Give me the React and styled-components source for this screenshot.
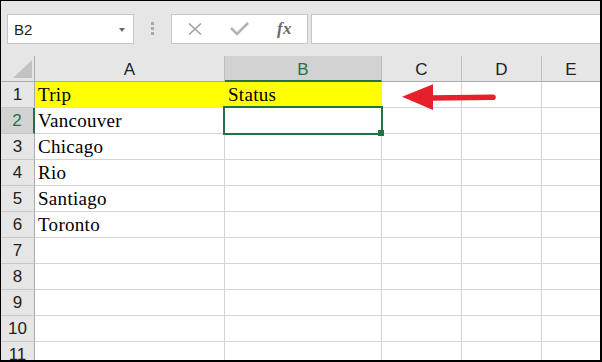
import React from "react";
import styled, { createGlobalStyle } from "styled-components";

const GREEN = "#217346";
const GRID = "#d4d4d4";

const columns = ["A", "B", "C", "D", "E"];
const rows = [
  ["Trip", "Status"],
  ["Vancouver", ""],
  ["Chicago", ""],
  ["Rio", ""],
  ["Santiago", ""],
  ["Toronto", ""],
  ["", ""],
  ["", ""],
  ["", ""],
  ["", ""],
  ["", ""],
];

const GlobalStyle = createGlobalStyle`
  html, body {
    margin: 0;
    padding: 0;
    background: #fff;
  }
  * {
    box-sizing: border-box;
  }
`;

function App() {
  return (
    <>
      <GlobalStyle />
      <Frame>
        <Toolbar>
          <NameBox>
            <span>B2</span>
            <Caret />
          </NameBox>
          <Grip>
            <Dot />
            <Dot />
            <Dot />
          </Grip>
          <FormulaButtons>
            <Slot>
              <svg width="14" height="12" viewBox="0 0 14 12">
                <path
                  d="M1 0.5 L13 11.5 M13 0.5 L1 11.5"
                  stroke="#a3a3a3"
                  strokeWidth="1.6"
                  fill="none"
                />
              </svg>
            </Slot>
            <Slot>
              <svg width="19" height="14" viewBox="0 0 19 14">
                <path
                  d="M1 6 L7 12 L18 1"
                  stroke="#b3b3b3"
                  strokeWidth="2.6"
                  fill="none"
                />
              </svg>
            </Slot>
            <Slot>
              <Fx>fx</Fx>
            </Slot>
          </FormulaButtons>
          <FormulaInput />
        </Toolbar>

        <Sheet>
          <Corner>
            <svg width="20" height="19" viewBox="0 0 20 19">
              <polygon points="19,0 19,18 0,18" fill="#c2c2c2" />
            </svg>
          </Corner>
          {columns.map((c) => (
            <ColHead key={c} $selected={c === "B"} $last={c === "E"}>
              {c}
            </ColHead>
          ))}

          {rows.map((row, i) => (
            <React.Fragment key={i}>
              <RowHead $selected={i === 1}>{i + 1}</RowHead>
              <Cell $fill={i === 0}>{row[0]}</Cell>
              <Cell $fill={i === 0}>
                {row[1]}
                {i === 1 && (
                  <>
                    <Selection />
                    <Handle />
                  </>
                )}
              </Cell>
              <Cell />
              <Cell />
              <Cell $last />
            </React.Fragment>
          ))}
        </Sheet>

        <Arrow width="100" height="30" viewBox="0 0 100 30">
          <line
            x1="30"
            y1="16"
            x2="93"
            y2="15.2"
            stroke="#e5202a"
            strokeWidth="5.6"
            strokeLinecap="round"
          />
          <polygon points="2,14.7 33,2.3 33,28" fill="#e5202a" />
        </Arrow>
      </Frame>
    </>
  );
}

export default App;

const Frame = styled.div`
  position: relative;
  width: 602px;
  height: 362px;
  overflow: hidden;
  border-style: solid;
  border-color: #000;
  border-width: 1px 2px 2px 1px;
  background: #e6e6e6;
`;

const Toolbar = styled.div`
  display: flex;
  align-items: flex-start;
  height: 55px;
  padding: 13px 0 0 6px;
  background: #e6e6e6;
`;

const NameBox = styled.div`
  display: flex;
  align-items: center;
  justify-content: space-between;
  width: 127px;
  height: 30px;
  padding: 0 8px 0 6px;
  background: #fff;
  border: 1px solid #c6c6c6;
  font-family: "Liberation Sans", Arial, sans-serif;
  font-size: 15px;
  color: #222;
`;

const Caret = styled.div`
  width: 0;
  height: 0;
  margin-top: 1px;
  border-left: 3px solid transparent;
  border-right: 3px solid transparent;
  border-top: 4px solid #6b6b6b;
`;

const Grip = styled.div`
  display: flex;
  flex-direction: column;
  align-items: center;
  gap: 2px;
  width: 37px;
  padding-top: 8px;
`;

const Dot = styled.div`
  width: 3px;
  height: 3px;
  background: #a9a9a9;
`;

const FormulaButtons = styled.div`
  display: flex;
  width: 137px;
  height: 30px;
  background: #fff;
  border: 1px solid #c6c6c6;
`;

const Slot = styled.div`
  display: flex;
  align-items: center;
  justify-content: center;
  width: 45px;
  height: 28px;
`;

const Fx = styled.span`
  font-family: "Liberation Serif", "Times New Roman", serif;
  font-style: italic;
  font-weight: bold;
  font-size: 17px;
  color: #6a6a6a;
  letter-spacing: 0.5px;
`;

const FormulaInput = styled.div`
  flex: 1;
  height: 30px;
  margin-left: 3px;
  background: #fff;
  border: 1px solid #c6c6c6;
  border-right: none;
`;

const Sheet = styled.div`
  display: grid;
  grid-template-columns: 34px 190px 157px 80px 80px 58px;
  grid-auto-rows: 26px;
  background: #fff;
`;

const Corner = styled.div`
  display: flex;
  align-items: flex-start;
  padding: 4px 0 0 12px;
  background: #e6e6e6;
  border-right: 1px solid #ababab;
  border-bottom: 1px solid #ababab;
`;

const ColHead = styled.div`
  padding-top: 2px;
  text-align: center;
  line-height: 23px;
  font-family: "Liberation Sans", Arial, sans-serif;
  font-size: 17px;
  color: ${(p) => (p.$selected ? GREEN : "#222")};
  background: ${(p) => (p.$selected ? "#d2d2d2" : "#e6e6e6")};
  border-right: ${(p) => (p.$last ? "none" : "1px solid #bdbdbd")};
  border-bottom: ${(p) =>
    p.$selected ? `2px solid ${GREEN}` : "1px solid #ababab"};
`;

const RowHead = styled.div`
  padding-top: 1px;
  text-align: center;
  line-height: 24px;
  font-family: "Liberation Sans", Arial, sans-serif;
  font-size: 17px;
  color: ${(p) => (p.$selected ? GREEN : "#222")};
  background: ${(p) => (p.$selected ? "#d2d2d2" : "#e6e6e6")};
  border-right: ${(p) =>
    p.$selected ? `2px solid ${GREEN}` : "1px solid #ababab"};
  border-bottom: 1px solid #c8c8c8;
`;

const Cell = styled.div`
  position: relative;
  padding-left: 3px;
  line-height: 25px;
  white-space: nowrap;
  font-family: "Liberation Serif", "Times New Roman", serif;
  font-size: 19px;
  letter-spacing: 0.3px;
  color: #000;
  background: ${(p) => (p.$fill ? "#ffff00" : "#fff")};
  border-right: ${(p) =>
    p.$last ? "none" : `1px solid ${p.$fill ? "#ffff00" : GRID}`};
  border-bottom: 1px solid ${(p) => (p.$fill ? "#ffff00" : GRID)};
`;

const Selection = styled.div`
  position: absolute;
  top: -2px;
  left: -2px;
  right: -2px;
  bottom: -2px;
  border: 2px solid ${GREEN};
  z-index: 2;
`;

const Handle = styled.div`
  position: absolute;
  right: -3px;
  bottom: -3px;
  width: 6px;
  height: 6px;
  background: ${GREEN};
  z-index: 3;
`;

const Arrow = styled.svg`
  position: absolute;
  left: 399px;
  top: 81px;
`;
